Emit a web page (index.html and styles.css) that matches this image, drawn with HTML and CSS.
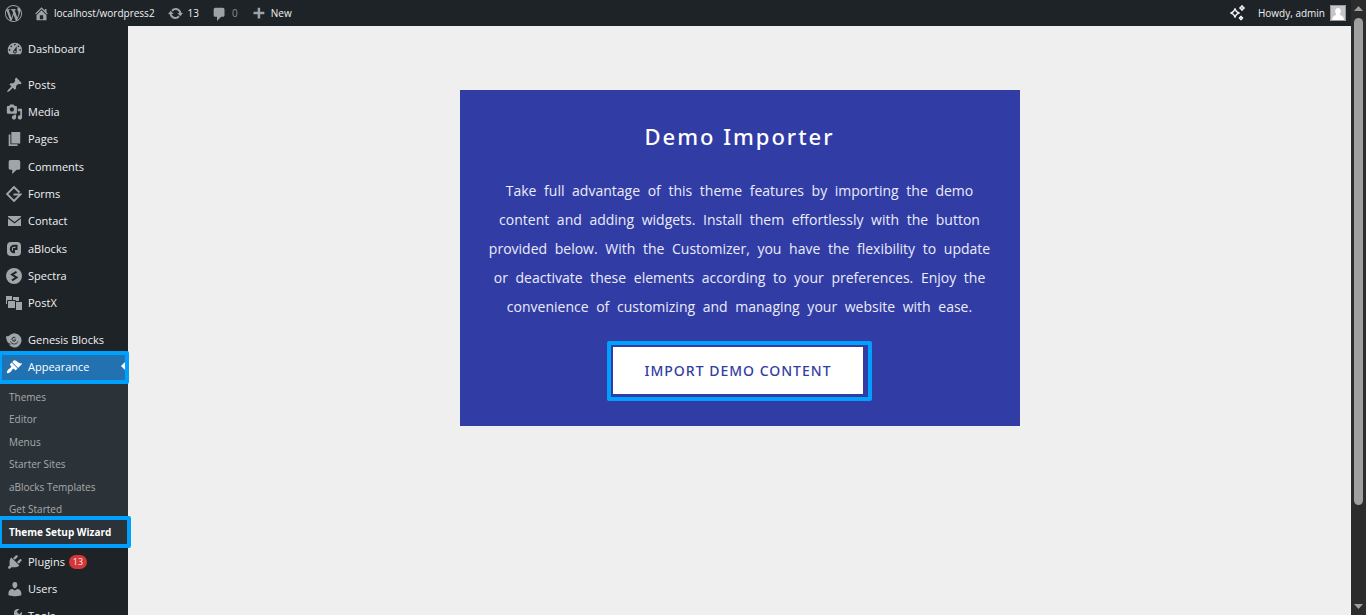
FILE: index.html
```html
<!DOCTYPE html>
<html lang="en">
<head>
<meta charset="utf-8">
<title>Theme Setup Wizard</title>
<link rel="stylesheet" href="styles.css">
</head>
<body>
<div class="page">
  <header class="adminbar">
    <a class="bar-item bar-logo" href="#" aria-label="About WordPress"><svg class="logo" viewBox="0 0 20 20"><path d="M20 10c0-5.51-4.49-10-10-10C4.48 0 0 4.49 0 10c0 5.52 4.48 10 10 10 5.51 0 10-4.48 10-10zM7.78 15.37L4.37 6.22c.55-.02 1.17-.08 1.17-.08.5-.06.44-1.13-.06-1.11 0 0-1.45.11-2.37.11-.18 0-.37 0-.58-.01C4.12 2.69 6.87 1.11 10 1.11c2.33 0 4.45.87 6.05 2.34-.68-.11-1.65.39-1.65 1.58 0 .74.45 1.36.9 2.1.35.61.55 1.36.55 2.46 0 1.49-1.4 5-1.4 5l-3.03-8.37c.54-.02.82-.17.82-.17.5-.05.44-1.25-.06-1.22 0 0-1.44.12-2.38.12-.87 0-2.33-.12-2.33-.12-.5-.03-.56 1.2-.06 1.22l.92.08 1.26 3.41zM17.41 10c.24-.64.74-1.87.43-4.25.7 1.29 1.05 2.71 1.05 4.25 0 3.29-1.73 6.24-4.4 7.78.97-2.59 1.94-5.2 2.92-7.78zM6.1 18.09C3.12 16.65 1.11 13.53 1.11 10c0-1.3.23-2.48.72-3.59C3.25 10.3 4.67 14.2 6.1 18.09zm4.03-6.63l2.58 6.98c-.86.29-1.76.45-2.71.45-.79 0-1.57-.11-2.29-.33.81-2.38 1.62-4.74 2.42-7.1z"/></svg></a>
    <a class="bar-item bar-site" href="#"><svg class="icon" viewBox="1 1 18 18"><path fill-rule="evenodd" d="M16 8.5l1.53 1.53-1.06 1.06L10 4.6l-6.47 6.49-1.06-1.06L10 2.5l4 4v-2h2v4zm-6-2.46l6 5.99V18H4v-5.97zM12 17v-5H8v5h4z"/></svg>localhost/wordpress2</a>
    <a class="bar-item bar-updates" href="#"><svg class="icon" viewBox="1 1 18 18"><path d="M10.2 3.28c3.53 0 6.43 2.61 6.92 6h2.08l-3.5 4-3.5-4h2.32c-.45-1.97-2.21-3.45-4.32-3.45-1.45 0-2.73.71-3.54 1.78L4.95 5.66C6.23 4.2 8.11 3.28 10.2 3.28zm-.4 13.44c-3.52 0-6.43-2.61-6.92-6H.8l3.5-4c1.17 1.33 2.33 2.67 3.5 4H5.48c.45 1.97 2.21 3.45 4.32 3.45 1.45 0 2.73-.71 3.54-1.78l1.71 1.95c-1.28 1.46-3.15 2.38-5.25 2.38z"/></svg>13</a>
    <a class="bar-item bar-comments" href="#"><svg class="icon" viewBox="1 1 18 18"><path d="M5 3h9c1.1 0 2 .9 2 2v7c0 1.1-.9 2-2 2h-2l-5 5v-5H5c-1.1 0-2-.9-2-2V5c0-1.1.9-2 2-2z"/></svg><span class="dim">0</span></a>
    <a class="bar-item" href="#"><svg class="icon" viewBox="1 1 18 18"><path d="M17 8v3h-5v5H9v-5H4V8h5V3h3v5h5z"/></svg>New</a>
    <a class="bar-item bar-ai" href="#" aria-label="Assistant"><svg class="sparkle" viewBox="0 0 18 18"><path d="M7 4.500Q7.800 8.200 11.500 9 7.800 9.800 7 13.500 6.200 9.800 2.500 9 6.200 8.200 7 4.500ZM14 1.500Q14.500 3.500 16.500 4 14.500 4.500 14 6.500 13.500 4.500 11.500 4 13.500 3.500 14 1.500ZM13 12Q13.400 13.600 15 14 13.400 14.400 13 16 12.600 14.400 11 14 12.600 13.600 13 12Z"/></svg></a>
    <a class="bar-item bar-user" href="#">Howdy, admin<svg class="avatar" viewBox="0 0 16 16"><path fill="#c5c5c8" d="M0 0h16v16H0z"/><path fill="#fff" d="M8 3a3 3.300 0 0 1 2 5.700V10q3.500.7 4 5H2q.5-4.300 4-5V8.700A3 3.300 0 0 1 8 3z"/><path fill="none" stroke="#96989b" d="M.5.5h15v15H.5z"/></svg></a>
  </header>
  <div class="workspace">
    <nav class="sidebar" aria-label="Main menu">
      <ul class="menu">
        <li><a class="entry" href="#"><svg class="icon" viewBox="0 1 18 18"><path fill-rule="evenodd" d="M3.760 16h12.480c1.100-1.370 1.760-3.110 1.760-5 0-4.420-3.580-8-8-8s-8 3.580-8 8c0 1.890.660 3.630 1.760 5zM10 4c.550 0 1 .450 1 1s-.450 1-1 1-1-.450-1-1 .450-1 1-1zM6 6c.550 0 1 .450 1 1s-.450 1-1 1-1-.450-1-1 .450-1 1-1zm8 0c.550 0 1 .450 1 1s-.450 1-1 1-1-.450-1-1 .450-1 1-1zm-5.370 5.550L12 7v6c0 1.100-.9 2-2 2s-2-.9-2-2c0-.570.240-1.080.630-1.450zM4 10c.550 0 1 .450 1 1s-.450 1-1 1-1-.450-1-1 .450-1 1-1zm12 0c.550 0 1 .450 1 1s-.450 1-1 1-1-.450-1-1 .450-1 1-1zm-5 3c0-.550-.450-1-1-1s-1 .450-1 1 .450 1 1 1 1-.450 1-1z"/></svg>Dashboard</a></li>
      </ul>
      <ul class="menu">
        <li><a class="entry" href="#"><svg class="icon" viewBox="0 1 19 18"><path d="M10.440 3.020l1.820-1.820 6.360 6.350-1.830 1.820c-1.050-.680-2.480-.570-3.410.360l-.750.750c-.920.930-1.040 2.350-.350 3.410l-1.830 1.820-2.410-2.410-2.800 2.790c-.420.420-3.380 2.710-3.800 2.290s1.860-3.390 2.280-3.810l2.790-2.790L4.100 9.360l1.830-1.820c1.050.690 2.480.570 3.400-.360l.750-.750c.930-.920 1.050-2.350.360-3.410z"/></svg>Posts</a></li>
        <li><a class="entry" href="#"><svg class="icon" viewBox="0 1 19 18"><path fill-rule="evenodd" d="M13 11V4c0-.55-.45-1-1-1h-1.670L9 1H5L3.670 3H2c-.55 0-1 .45-1 1v7c0 .55.45 1 1 1h10c.55 0 1-.45 1-1zM7 4.500c1.380 0 2.500 1.120 2.500 2.500S8.380 9.500 7 9.500 4.500 8.380 4.500 7 5.620 4.500 7 4.500zM14 6h5v10.500c0 1.380-1.120 2.500-2.500 2.500S14 17.880 14 16.500s1.120-2.500 2.500-2.500c.17 0 .34.02.5.05V9h-3V6zm-4 8.050V13h2v3.500c0 1.380-1.120 2.500-2.500 2.500S7 17.880 7 16.500 8.120 14 9.500 14c.17 0 .34.02.5.05z"/></svg>Media</a></li>
        <li><a class="entry" href="#"><svg class="icon" viewBox="0 1 18 18"><path d="M6 15V2h10v13H6zm-1 1h8v2H3V5h2v11z"/></svg>Pages</a></li>
        <li><a class="entry" href="#"><svg class="icon" viewBox="0 1 18 18"><path d="M5 2h9c1.100 0 2 .9 2 2v7c0 1.100-.9 2-2 2h-2l-5 5v-5H5c-1.100 0-2-.9-2-2V4c0-1.100.9-2 2-2z"/></svg>Comments</a></li>
        <li><a class="entry" href="#"><svg class="icon" viewBox="0 0 16 16"><path fill="none" stroke="currentColor" stroke-width="1.900" d="M13.500 6.500 8 1 1 8l7 7 6.500-6.500H7.500"/></svg>Forms</a></li>
        <li><a class="entry" href="#"><svg class="icon" viewBox="0 0 16 16"><path d="M2 3h13v1L8.500 9 2 4zM2 5.500 8.500 10.500 15 5.500V13H2z"/></svg>Contact</a></li>
        <li><a class="entry" href="#"><svg class="icon" viewBox="0 0 16 16"><rect x="1" y="1" width="14" height="14" rx="4"/><path fill="none" stroke="#1d2327" stroke-width="2" d="M11.500 4.800H8a3.200 3.200 0 1 0 0 6.400V8h2.500V5"/></svg>aBlocks</a></li>
        <li><a class="entry" href="#"><svg class="icon" viewBox="0 0 16 16"><circle cx="8" cy="8" r="8"/><path fill="none" stroke="#1d2327" stroke-width="2" d="M10.500 3.800 6 6.500l4.500 3L6 12.300"/></svg>Spectra</a></li>
        <li><a class="entry" href="#"><svg class="icon" viewBox="0 0 16 16"><path d="M0 1h6v4H3v4H0zM7 2h6v4H7zM2 6h7v8H2zM10 7h6v8h-6V7z"/><path fill="none" stroke="#1d2327" d="M1.500 5.500h8v8h-8z"/></svg>PostX</a></li>
      </ul>
      <ul class="menu menu-active">
        <li><a class="entry" href="#"><svg class="icon" viewBox="0 0 16 16"><path d="M0 4q2 .8 4-1a7 7 0 1 1-1.500 9Q4 13 5 12 0 11 0 4z"/><path fill="none" stroke="#1d2327" stroke-width=".8" d="M4.500 9.500a4 4 0 0 0 7.500 0"/><path fill="none" stroke="#1d2327" d="M9.500 6a1.900 1.900 0 1 0 .2 2H8.200"/></svg>Genesis Blocks</a></li>
        <li class="marked"><a class="entry current" href="#"><svg class="icon" viewBox="0 1 19 18"><path d="M14.480 11.060L7.410 3.990l1.500-1.500c.5-.56 2.300-.47 3.510.32 1.210.8 1.430 1.280 2.910 2.100 1.180.64 2.450 1.260 4.450.85zm-.71.71L6.700 4.700 4.930 6.470c-.39.39-.39 1.020 0 1.410l1.060 1.060c.39.39.39 1.030 0 1.420-.6.6-1.430 1.110-2.210 1.690-.35.26-.7.53-1.010.84C1.430 14.230.4 16.080 1.400 17.070c.99 1 2.840-.03 4.180-1.360.31-.31.58-.66.85-1.020.57-.78 1.080-1.610 1.690-2.210.39-.39 1.020-.39 1.410 0l1.060 1.060c.39.39 1.020.39 1.410 0z"/></svg>Appearance</a></li>
      </ul>
      <ul class="submenu">
        <li><a href="#">Themes</a></li>
        <li><a href="#">Editor</a></li>
        <li><a href="#">Menus</a></li>
        <li><a href="#">Starter Sites</a></li>
        <li><a href="#">aBlocks Templates</a></li>
        <li><a href="#">Get Started</a></li>
        <li class="marked marked-wide"><a class="selected" href="#" aria-current="page">Theme Setup Wizard</a></li>
      </ul>
      <ul class="menu menu-last">
        <li><a class="entry" href="#"><svg class="icon" viewBox="0 1 18 18"><path d="M13.110 4.360L9.870 7.600 8 5.730l3.240-3.240c.35-.34 1.050-.2 1.560.32.52.51.66 1.210.31 1.550zm-8 1.770l.91-1.120 9.010 9.010-1.190.84c-.71.71-2.630 1.160-3.820 1.160H6.140L4.900 17.260c-.59.59-1.540.59-2.120 0-.59-.58-.59-1.530 0-2.120l1.240-1.240v-3.880c0-1.130.4-3.190 1.090-3.890zm7.260 3.970l3.240-3.240c.34-.35 1.040-.21 1.550.31.52.51.66 1.210.31 1.550l-3.240 3.250z"/></svg>Plugins<span class="count">13</span></a></li>
        <li><a class="entry" href="#"><svg class="icon" viewBox="0 1 18 18"><path d="M10 9.250c-2.270 0-2.730-3.440-2.730-3.440C7 4.020 7.820 2 9.970 2c2.160 0 2.980 2.020 2.710 3.810 0 0-.41 3.440-2.680 3.440zm0 2.570L12.720 10c2.390 0 4.520 2.330 4.520 4.530v2.490s-3.650 1.130-7.240 1.130c-3.650 0-7.240-1.130-7.240-1.130v-2.490c0-2.250 1.940-4.480 4.470-4.480z"/></svg>Users</a></li>
        <li><a class="entry" href="#"><svg class="icon" viewBox="0 1 18 18"><path d="M16.680 9.770c-1.340 1.340-3.300 1.670-4.950.99l-5.410 6.520c-.99.99-2.590.99-3.580 0s-.99-2.590 0-3.570l6.520-5.420c-.68-1.650-.35-3.610.99-4.950 1.280-1.280 3.120-1.620 4.720-1.060l-2.890 2.890 2.820 2.820 2.860-2.870c.53 1.580.18 3.390-1.080 4.650z"/></svg>Tools</a></li>
      </ul>
    </nav>
    <main class="content">
      <section class="importer">
        <h1>Demo Importer</h1>
        <p>Take full advantage of this theme features by importing the demo<br>content and adding widgets. Install them effortlessly with the button<br>provided below. With the Customizer, you have the flexibility to update<br>or deactivate these elements according to your preferences. Enjoy the<br>convenience of customizing and managing your website with ease.</p>
        <div class="action"><button type="button">IMPORT DEMO CONTENT</button></div>
      </section>
    </main>
  </div>
</div>
<div class="scrollbar" aria-hidden="true">
  <svg class="arrow" viewBox="0 0 9 5"><path d="M4.500 0 9 5H0z"/></svg>
  <div class="track"><div class="thumb"></div></div>
  <svg class="arrow" viewBox="0 0 9 5"><path d="M0 0h9L4.500 5z"/></svg>
</div>
</body>
</html>
```
FILE: styles.css
```css
* { box-sizing: border-box; }

body {
  display: flex;
  height: 100vh;
  margin: 0;
  overflow: hidden;
  background: #efefef;
  color: #f0f0f1;
  font: 11px/16px "Open Sans", "Noto Sans", sans-serif;
}

a { color: inherit; text-decoration: none; }
ul { margin: 0; padding: 0; list-style: none; }
svg { display: block; flex: none; fill: currentColor; }

.page {
  display: flex;
  flex: 1;
  flex-direction: column;
  min-width: 0;
}

/* Admin bar */
.adminbar {
  display: flex;
  flex: none;
  align-items: center;
  height: 26px;
  padding: 0 5px;
  background: #1d2327;
  font-size: 10px;
}
.bar-item {
  display: flex;
  align-items: center;
  gap: 5px;
  height: 24px;
  white-space: nowrap;
}
.bar-item .icon { width: 15px; height: 15px; color: #9ca2a7; }
.bar-logo { margin-right: 12px; }
.logo { width: 17px; height: 17px; color: #9ca2a7; }
.bar-site, .bar-updates, .bar-comments { margin-right: 13px; }
.dim { color: #8c9196; }
.bar-ai { margin-left: auto; margin-right: 12px; }
.sparkle { width: 18px; height: 18px; fill: none; stroke: #f0f0f1; stroke-width: 1.4; }
.avatar { width: 16px; height: 16px; }

/* Sidebar */
.workspace { display: flex; flex: 1; min-height: 0; }
.sidebar {
  flex: none;
  width: 128px;
  padding-top: 9px;
  background: #1d2327;
}
.menu { margin-bottom: 9px; }
.menu li:nth-child(3n + 4) { margin-top: 1px; }
.menu + .menu-active { margin: 10px 0 0; }
.entry {
  display: flex;
  align-items: center;
  gap: 6px;
  height: 27px;
  padding-left: 6px;
}
.entry .icon { width: 16px; height: 16px; color: #a0a5aa; }
.current { position: relative; background: #2271b1; color: #fff; }
.current .icon { color: #fff; }
.current::after {
  position: absolute;
  top: 9px;
  right: 3px;
  border: 4px solid transparent;
  border-right-color: #fff;
  border-left-width: 0;
  content: "";
}
.count {
  min-width: 18px;
  margin-left: -2px;
  border-radius: 8px;
  background: #d63638;
  font-size: 9px;
  line-height: 14px;
  text-align: center;
}

.submenu {
  padding: 6px 0 5px;
  background: #2c3338;
  color: #a7abaf;
  font-size: 10px;
}
.submenu a {
  display: block;
  padding-left: 9px;
  line-height: 22px;
  white-space: nowrap;
}
.submenu li:nth-child(even) { padding-bottom: 1px; }
.submenu .selected { color: #fff; font-weight: 700; }

/* Highlight frames lying over the menu */
.marked { position: relative; z-index: 1; }
.marked::after {
  position: absolute;
  inset: -2px -1px -4px -2px;
  border: 4px solid #00a0ff;
  border-radius: 2px;
  content: "";
  pointer-events: none;
}
.marked-wide::after { inset: -5px -3px -5px -2px; }

/* Importer card */
.content {
  flex: 1;
  min-width: 0;
  padding: 64px 24px;
}
.importer {
  max-width: 560px;
  margin: 0 auto;
  padding: 28px 24px 25px;
  background: #313da5;
  color: #fff;
  text-align: center;
}
.importer h1 {
  margin: 0 0 22px;
  font: 500 22px/36px "Noto Sans", "Open Sans", sans-serif;
  letter-spacing: 2px;
}
.importer p {
  margin: 0 0 20px;
  color: #ebecfa;
  font-size: 14px;
  line-height: 29px;
  white-space: nowrap;
  word-spacing: 4px;
}
.action {
  width: fit-content;
  margin: 0 auto;
  padding: 2px 5px 3px 2px;
  border: 4px solid #00a0ff;
  border-radius: 2px;
}
.importer button {
  display: block;
  padding: 12px 31px;
  border: 0;
  background: #fff;
  color: #313da5;
  font: 500 14px/23px "Noto Sans", "Open Sans", sans-serif;
  letter-spacing: 1px;
}

/* Scrollbar */
.scrollbar {
  display: flex;
  flex: none;
  flex-direction: column;
  align-items: center;
  width: 15px;
  padding: 6px 0;
  background: #2c2c2c;
}
.arrow { width: 9px; height: 5px; fill: #9f9f9f; }
.track { flex: 1; width: 9px; padding: 7px 0 13px; }
.thumb { height: 85%; border-radius: 5px; background: #9f9f9f; }
```
